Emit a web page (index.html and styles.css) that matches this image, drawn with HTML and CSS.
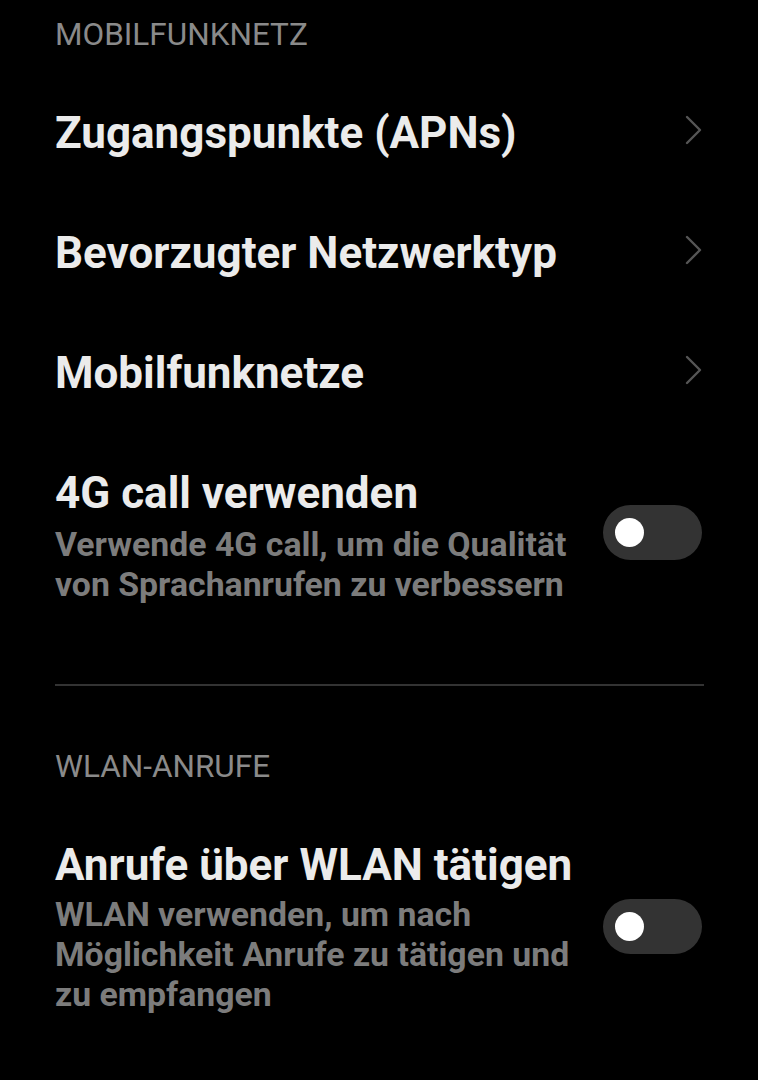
FILE: index.html
```html
<!DOCTYPE html>
<html lang="de">
<head>
<meta charset="utf-8">
<title>Mobilfunknetz</title>
<link rel="stylesheet" href="styles.css">
</head>
<body>
<main class="page">
  <h2 class="section-head first">MOBILFUNKNETZ</h2>

  <div class="row nav">
    <span class="title">Zugangspunkte (APNs)</span>
    <svg class="chev" width="18" height="30" viewBox="0 0 18 30"><path d="M2 2 L15 15 L2 28" fill="none" stroke="#555" stroke-width="2.4" stroke-linecap="round" stroke-linejoin="round"/></svg>
  </div>
  <div class="row nav">
    <span class="title">Bevorzugter Netzwerktyp</span>
    <svg class="chev" width="18" height="30" viewBox="0 0 18 30"><path d="M2 2 L15 15 L2 28" fill="none" stroke="#555" stroke-width="2.4" stroke-linecap="round" stroke-linejoin="round"/></svg>
  </div>
  <div class="row nav">
    <span class="title">Mobilfunknetze</span>
    <svg class="chev" width="18" height="30" viewBox="0 0 18 30"><path d="M2 2 L15 15 L2 28" fill="none" stroke="#555" stroke-width="2.4" stroke-linecap="round" stroke-linejoin="round"/></svg>
  </div>

  <div class="row toggle-row r4g">
    <div class="text">
      <div class="title">4G call verwenden</div>
      <div class="sub">Verwende 4G call, um die Qualität<br>von Sprachanrufen zu verbessern</div>
    </div>
    <span class="switch"><span class="knob"></span></span>
  </div>

  <hr class="divider">

  <h2 class="section-head second">WLAN-ANRUFE</h2>

  <div class="row toggle-row rwlan">
    <div class="text">
      <div class="title">Anrufe über WLAN tätigen</div>
      <div class="sub">WLAN verwenden, um nach<br>Möglichkeit Anrufe zu tätigen und<br>zu empfangen</div>
    </div>
    <span class="switch"><span class="knob"></span></span>
  </div>
</main>
</body>
</html>
```

FILE: styles.css
```css
html, body {
  margin: 0;
  padding: 0;
  background: #000;
}
body {
  font-family: Roboto, "Liberation Sans", sans-serif;
  -webkit-font-smoothing: antialiased;
}
.page {
  padding: 0 54px 0 55px;
}
.section-head {
  margin: 0;
  font-size: 31.5px;
  font-weight: 400;
  line-height: 40px;
  color: #8a8a8a;
}
.section-head.first {
  padding-top: 15px;
}
.section-head.second {
  margin-top: 61px;
}
.row {
  display: flex;
  align-items: center;
  justify-content: space-between;
}
.nav {
  height: 120px;
}
.section-head.first + .nav {
  margin-top: 18px;
}
.title {
  font-size: 44px;
  font-weight: 700;
  line-height: 50px;
  color: #ebebeb;
  white-space: nowrap;
}
.chev {
  display: block;
  margin-right: 1px;
  margin-bottom: 6px;
}
.toggle-row .text {
  display: flex;
  flex-direction: column;
}
.sub {
  margin-top: 7px;
  font-size: 33.8px;
  font-weight: 700;
  line-height: 40px;
  color: #7c7c7c;
  white-space: nowrap;
}
.r4g {
  padding-top: 35px;
}
.r4g .switch {
  margin-bottom: 8px;
}
.rwlan {
  margin-top: 53px;
}
.rwlan .sub {
  margin-top: 5px;
}
.rwlan .switch {
  margin-bottom: 3px;
}
.switch {
  display: block;
  position: relative;
  flex: none;
  width: 99px;
  height: 55px;
  border-radius: 28px;
  background: #333333;
  margin-right: 2px;
}
.knob {
  position: absolute;
  left: 12px;
  top: 13px;
  width: 29px;
  height: 29px;
  border-radius: 50%;
  background: #fff;
}
.divider {
  margin: 79px 0 0 0;
  border: 0;
  height: 2px;
  background: #333;
}
```
